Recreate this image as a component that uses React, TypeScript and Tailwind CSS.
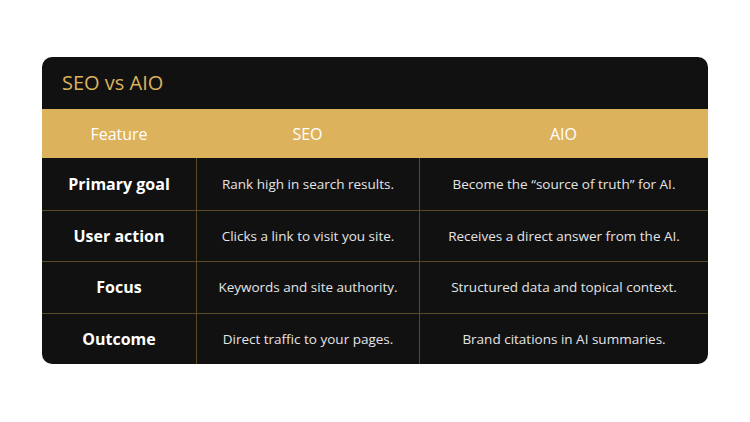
const rows = [
  { feature: 'Primary goal', seo: 'Rank high in search results.', aio: 'Become the \u201csource of truth\u201d for AI.' },
  { feature: 'User action', seo: 'Clicks a link to visit you site.', aio: 'Receives a direct answer from the AI.' },
  { feature: 'Focus', seo: 'Keywords and site authority.', aio: 'Structured data and topical context.' },
  { feature: 'Outcome', seo: 'Direct traffic to your pages.', aio: 'Brand citations in AI summaries.' },
];

export default function App() {
  return (
    <div className="w-[750px] h-[422px] bg-white pt-[57px] pl-[42px]" style={{ fontFamily: '"Open Sans", sans-serif' }}>
      <div className="w-[666px] rounded-[10px] overflow-hidden bg-[#111111]">
        <div className="h-[52px] flex items-center pl-[20px] text-[20px] text-[#dcb25c]">SEO vs AIO</div>
        <div className="grid grid-cols-[154px_223px_289px] h-[49px] bg-[#ddb25c] text-white text-[16px]">
          <div className="flex items-center justify-center">Feature</div>
          <div className="flex items-center justify-center">SEO</div>
          <div className="flex items-center justify-center">AIO</div>
        </div>
        {rows.map((row, i) => (
          <div
            key={row.feature}
            className={`grid grid-cols-[154px_223px_289px] h-[51.5px] ${i > 0 ? 'border-t border-[#5b4a26]' : ''}`}
          >
            <div className="flex items-center justify-center text-white font-bold text-[16px]">{row.feature}</div>
            <div className="flex items-center justify-center border-l border-[#5b4a26] text-[#e4e4e4] text-[13.5px]">{row.seo}</div>
            <div className="flex items-center justify-center border-l border-[#5b4a26] text-[#e4e4e4] text-[13.5px]">{row.aio}</div>
          </div>
        ))}
      </div>
    </div>
  );
}
